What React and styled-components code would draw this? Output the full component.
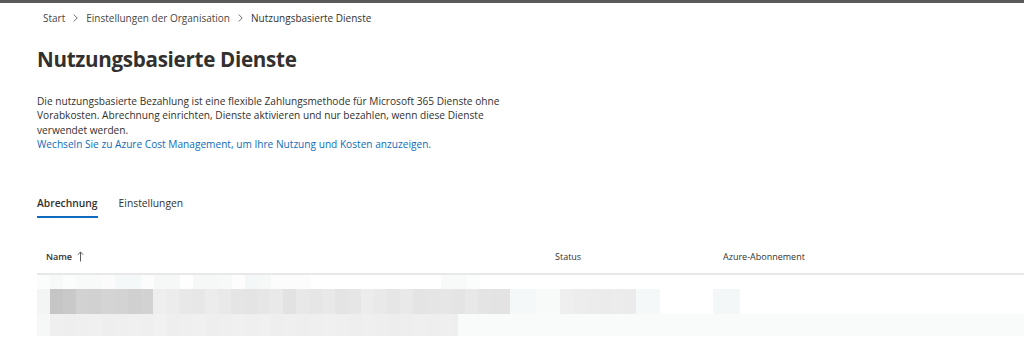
import React from "react";
import styled, { createGlobalStyle } from "styled-components";

const GlobalStyle = createGlobalStyle`
  html, body {
    margin: 0;
    padding: 0;
    background: #fff;
  }
  body {
    font-family: "Segoe UI", "Open Sans", "Noto Sans", sans-serif;
    color: #323130;
  }
`;

const Page = styled.div`
  width: 1024px;
  height: 349px;
  overflow: hidden;
  border-top: 3px solid #5a5a5a;
  box-sizing: border-box;
`;

const Breadcrumb = styled.nav`
  display: flex;
  align-items: center;
  gap: 7px;
  padding: 5px 0 0 43px;
  height: 20px;
  font-size: 10px;
  color: #323130;
`;

const Crumb = styled.span`
  color: ${(p) => (p.current ? "#323130" : "#484644")};
`;

const Chevron = styled.span`
  display: flex;
  align-items: center;
  padding: 0 1px;
`;

const Content = styled.div`
  padding: 0 0 0 37px;
`;

const Title = styled.h1`
  margin: 17px 0 0;
  font-size: 20.6px;
  font-weight: 700;
  letter-spacing: -0.3px;
  line-height: 28px;
  color: #323130;
`;

const Description = styled.p`
  margin: 21px 0 0;
  width: 480px;
  font-size: 10.15px;
  line-height: 14.3px;
  color: #323130;
`;

const Link = styled.a`
  color: #0f6cbd;
  text-decoration: none;
`;

const Tabs = styled.div`
  display: flex;
  gap: 21px;
  margin-top: 45px;
`;

const Tab = styled.div`
  font-size: 10.3px;
  padding-bottom: 6px;
  color: #323130;
  font-weight: ${(p) => (p.active ? 600 : 400)};
  border-bottom: 2px solid ${(p) => (p.active ? "#0f6cbd" : "transparent")};
`;

const Table = styled.div`
  margin-top: 21px;
`;

const HeaderRow = styled.div`
  display: grid;
  grid-template-columns: 518px 168px 1fr;
  height: 34px;
  align-items: center;
  border-bottom: 2px solid #e8e8e8;
  font-size: 9px;
  color: #323130;
`;

const HeaderCell = styled.div`
  padding-left: ${(p) => p.pad || 0}px;
  display: flex;
  align-items: center;
  gap: 5px;
  font-weight: ${(p) => (p.bold ? 600 : 400)};
`;

const MosaicRow = styled.div`
  display: flex;
  height: ${(p) => p.h}px;
`;

const Block = styled.div`
  height: 100%;
  flex: none;
`;

// pixelated (censored) table rows: [width, colour]
const row0 = [
  [13, "#fbfcfc"], [13, "#f7f9f9"], [13, "#fbfcfc"], [26, "#f8fafa"], [13, "#fbfbfb"], [26, "#f5f8f8"],
  [13, "#fcfcfc"], [26, "#f6f8f8"], [13, "#fefefe"], [26, "#f6f8f8"], [13, "#f7f9f9"], [13, "#fdfdfd"],
  [13, "#f4f7f7"], [13, "#f6f8f8"], [40, "#fcfcfc"], [130, "#ffffff"], [26, "#f8fafa"], [13, "#fbfcfc"],
];

const row1 = [
  [13, "#f3f4f4"], [13, "#c5c5c5"], [13, "#c9c9c9"], [13, "#d2d2d2"], [13, "#d1d1d1"], [13, "#d4d4d4"],
  [13, "#d3d3d3"], [13, "#d0d0d0"], [12, "#d2d2d2"],
  [13, "#eeeeee"], [13, "#ececec"], [13, "#e8e8e8"], [13, "#e7e7e7"], [13, "#ececec"], [13, "#e9e9e9"],
  [13, "#e5e5e5"], [13, "#e4e4e4"], [13, "#e6e6e6"], [13, "#e9e9e9"], [13, "#e2e2e2"], [13, "#e8e8e8"],
  [13, "#e6e6e6"], [13, "#e9e9e9"], [13, "#e4e4e4"], [13, "#e6e6e6"], [13, "#ececec"], [13, "#e9e9e9"],
  [13, "#e6e6e6"], [13, "#e9e9e9"], [13, "#e4e4e4"], [13, "#e5e5e5"], [13, "#e6e6e6"], [13, "#e4e4e4"],
  [13, "#e8e8e8"], [13, "#e4e4e4"], [19, "#e3e3e3"],
  [26, "#f5f8f8"], [24, "#f8fafa"],
  [13, "#efefef"], [13, "#ededed"], [13, "#ececec"], [13, "#ebebeb"], [13, "#ececec"], [11, "#ebebeb"],
  [24, "#f5f8f8"], [53, "#ffffff"], [27, "#f4f7f7"],
];

const row2 = [
  [13, "#f6f7f7"], [13, "#efefef"], [13, "#eeeeee"], [13, "#efefef"], [13, "#f0f0f0"], [13, "#eeeeee"],
  [13, "#efefef"], [13, "#f0f0f0"], [13, "#efefef"], [13, "#f1f1f1"], [13, "#eeeeee"], [13, "#efefef"],
  [13, "#f0f0f0"], [13, "#eeeeee"], [13, "#efefef"], [13, "#f0f0f0"], [13, "#efefef"], [13, "#f0f0f0"],
  [13, "#eeeeee"], [13, "#efefef"], [13, "#eeeeee"], [13, "#efefef"], [13, "#f0f0f0"], [13, "#efefef"],
  [13, "#eeeeee"], [13, "#efefef"], [13, "#eeeeee"], [13, "#ededed"], [13, "#eeeeee"], [13, "#efefef"],
  [13, "#eeeeee"], [13, "#efefef"], [5, "#eeeeee"],
  [580, "#f9fbfb"],
];

function Mosaic({ blocks, h }) {
  return (
    <MosaicRow h={h}>
      {blocks.map(([w, c], i) => (
        <Block key={i} style={{ width: w, background: c }} />
      ))}
    </MosaicRow>
  );
}

function ChevronIcon() {
  return (
    <svg width="5" height="8" viewBox="0 0 5 8" fill="none" stroke="#605e5c" strokeWidth="0.9">
      <path d="M0.8 0.6L4.2 4L0.8 7.4" />
    </svg>
  );
}

function ArrowUp() {
  return (
    <svg width="7" height="11" viewBox="0 0 7 11" fill="none" stroke="#605e5c" strokeWidth="1">
      <path d="M3.5 10.5V1M0.8 3.7L3.5 1l2.7 2.7" />
    </svg>
  );
}

export default function App() {
  return (
    <>
      <GlobalStyle />
      <Page>
        <Breadcrumb>
          <Crumb>Start</Crumb>
          <Chevron><ChevronIcon /></Chevron>
          <Crumb>Einstellungen der Organisation</Crumb>
          <Chevron><ChevronIcon /></Chevron>
          <Crumb current>Nutzungsbasierte Dienste</Crumb>
        </Breadcrumb>
        <Content>
          <Title>Nutzungsbasierte Dienste</Title>
          <Description>
            Die nutzungsbasierte Bezahlung ist eine flexible Zahlungsmethode für Microsoft 365 Dienste ohne
            Vorabkosten. Abrechnung einrichten, Dienste aktivieren und nur bezahlen, wenn diese Dienste
            verwendet werden.
            <br />
            <Link href="#">Wechseln Sie zu Azure Cost Management, um Ihre Nutzung und Kosten anzuzeigen.</Link>
          </Description>
          <Tabs>
            <Tab active>Abrechnung</Tab>
            <Tab>Einstellungen</Tab>
          </Tabs>
          <Table>
            <HeaderRow>
              <HeaderCell pad={9} bold>
                Name <ArrowUp />
              </HeaderCell>
              <HeaderCell>Status</HeaderCell>
              <HeaderCell>Azure-Abonnement</HeaderCell>
            </HeaderRow>
            <Mosaic blocks={row0} h={14} />
            <Mosaic blocks={row1} h={25} />
            <Mosaic blocks={row2} h={22} />
          </Table>
        </Content>
      </Page>
    </>
  );
}
